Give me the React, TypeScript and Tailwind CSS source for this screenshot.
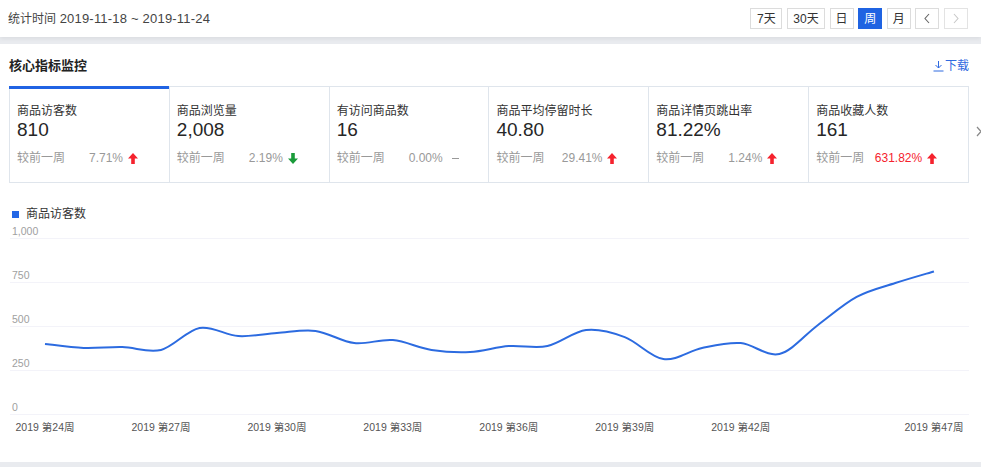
import React from "react";

const font = "font-['Liberation_Sans','Noto_Sans_CJK_SC',sans-serif]";

type Trend = "up" | "down" | "flat";

const metrics: { label: string; value: string; pct: string; trend: Trend; hot?: boolean }[] = [
  { label: "商品访客数", value: "810", pct: "7.71%", trend: "up" },
  { label: "商品浏览量", value: "2,008", pct: "2.19%", trend: "down" },
  { label: "有访问商品数", value: "16", pct: "0.00%", trend: "flat" },
  { label: "商品平均停留时长", value: "40.80", pct: "29.41%", trend: "up" },
  { label: "商品详情页跳出率", value: "81.22%", pct: "1.24%", trend: "up" },
  { label: "商品收藏人数", value: "161", pct: "631.82%", trend: "up", hot: true },
];

// weekly visitors, weeks 24..47
const data = [398, 375, 380, 364, 489, 443, 460, 472, 403, 420, 364, 352, 386, 386, 477, 437, 312, 375, 403, 341, 506, 665, 744, 810];

function TrendIcon({ trend }: { trend: Trend }) {
  if (trend === "flat") return <span className="ml-[9px] inline-block w-[7px] h-px bg-[#999]" />;
  const up = trend === "up";
  return (
    <svg width="10" height="11" viewBox="0 0 10 11" className="ml-[5px]">
      <g fill={up ? "#f5222d" : "#1a9b3a"} transform={up ? undefined : "rotate(180 5 5.5)"}>
        <polygon points="5,0 10,5.5 6.8,5.5 6.8,11 3.2,11 3.2,5.5 0,5.5" />
      </g>
    </svg>
  );
}

function MetricCell({ m, active }: { m: (typeof metrics)[number]; active: boolean }) {
  return (
    <div className="relative border-r border-[#dfe5ec] pl-[7px] pt-[16px] h-[95px]">
      {active && <div className="absolute -top-px -left-px right-0 h-[3px] bg-[#2063e3]" />}
      <div className="text-[12px] leading-[16px] text-[#333]">{m.label}</div>
      <div className="text-[19px] leading-[22px] text-[#262626]">{m.value}</div>
      <div className="flex items-center mt-[8px] text-[12px] leading-[18px] text-[#999]">
        <span className="w-[106px] flex justify-between">
          <span>较前一周</span>
          <span className={m.hot ? "text-[#f5222d]" : ""}>{m.pct}</span>
        </span>
        <TrendIcon trend={m.trend} />
      </div>
    </div>
  );
}

function smoothPath(pts: [number, number][]) {
  let d = `M${pts[0][0]},${pts[0][1]}`;
  for (let i = 0; i < pts.length - 1; i++) {
    const p0 = pts[i - 1] || pts[i];
    const p1 = pts[i];
    const p2 = pts[i + 1];
    const p3 = pts[i + 2] || p2;
    const c1x = p1[0] + (p2[0] - p0[0]) / 6;
    const c1y = p1[1] + (p2[1] - p0[1]) / 6;
    const c2x = p2[0] - (p3[0] - p1[0]) / 6;
    const c2y = p2[1] - (p3[1] - p1[1]) / 6;
    d += ` C${c1x},${c1y} ${c2x},${c2y} ${p2[0]},${p2[1]}`;
  }
  return d;
}

function Chart() {
  const top = 16;
  const h = 176;
  const x0 = 36;
  const step = 38.65;
  const pts = data.map((v, i) => [x0 + i * step, top + h - (v / 1000) * h] as [number, number]);
  const ticks = [1000, 750, 500, 250, 0];
  const xLabels = [24, 27, 30, 33, 36, 39, 42, 47];
  return (
    <svg width="960" height="218" className="block">
      {ticks.map((t, i) => {
        const y = top + i * 44;
        return (
          <g key={t}>
            <line x1="1" x2="960" y1={y + 0.5} y2={y + 0.5} stroke="#f3f3f9" />
            <text x="3" y={y - 3} fontSize="10.5" fill="#a0a0a0">
              {t.toLocaleString("en-US")}
            </text>
          </g>
        );
      })}
      <path d={smoothPath(pts)} fill="none" stroke="#2c6be0" strokeWidth="2" />
      {xLabels.map((w) => (
        <text key={w} x={x0 + (w - 24) * step} y="209" fontSize="10.5" fill="#555" textAnchor="middle">
          2019 第{w}周
        </text>
      ))}
    </svg>
  );
}

const ranges = [
  { t: "7天", w: "w-[32px]" },
  { t: "30天", w: "w-[38px]" },
  { t: "日", w: "w-[24px]" },
  { t: "周", w: "w-[24px]", active: true },
  { t: "月", w: "w-[24px]" },
];

export default function App() {
  return (
    <div className={`w-[981px] h-[467px] bg-[#e9ebef] overflow-hidden ${font}`}>
      {/* top bar */}
      <div className="h-[37px] bg-white flex items-center justify-between pl-[8px] pr-[13px] shadow-[0_2px_4px_rgba(0,0,0,0.06)]">
        <span className="text-[13px] text-[#444]">
          <span className="text-[12px]">统计时间</span>{" "}
          <span className="tracking-[0.2px]">2019-11-18 ~ 2019-11-24</span>
        </span>
        <div className="flex gap-[4.6px]">
          {ranges.map((r) => (
            <button
              key={r.t}
              className={`${r.w} h-[21px] text-[12px] leading-none border ${
                r.active ? "bg-[#1f63e2] border-[#1f63e2] text-white" : "bg-white border-[#dcdcdc] text-[#333]"
              }`}
            >
              {r.t}
            </button>
          ))}
          <button className="w-[24px] h-[21px] border border-[#dcdcdc] flex items-center justify-center">
            <svg width="8" height="11" viewBox="0 0 8 11">
              <path d="M6 1 L2 5.5 L6 10" fill="none" stroke="#666" strokeWidth="1.1" />
            </svg>
          </button>
          <button className="w-[24px] h-[21px] border border-[#e3e3e3] flex items-center justify-center">
            <svg width="8" height="11" viewBox="0 0 8 11">
              <path d="M2 1 L6 5.5 L2 10" fill="none" stroke="#c8c8c8" strokeWidth="1.1" />
            </svg>
          </button>
        </div>
      </div>

      {/* card */}
      <div className="mt-[7px] bg-white h-[418px] px-[9px] relative">
        <div className="h-[42px] flex items-center justify-between pt-[2px]">
          <span className="text-[13px] font-bold text-[#222]">核心指标监控</span>
          <span className="flex items-center text-[12px] text-[#2f6ae0] mr-[3px]">
            <svg width="11" height="12" viewBox="0 0 11 12" className="mr-[1px]">
              <path d="M5.5 1 V8 M2.5 5 L5.5 8 L8.5 5 M0.5 11 H10.5" fill="none" stroke="#2f6ae0" strokeWidth="1" />
            </svg>
            下载
          </span>
        </div>

        <div className="grid grid-cols-6 border-l border-t border-b border-[#dfe5ec] w-[960px]">
          {metrics.map((m, i) => (
            <MetricCell key={m.label} m={m} active={i === 0} />
          ))}
        </div>
        <svg width="8" height="11" viewBox="0 0 8 11" className="absolute left-[975px] top-[82px]">
          <path d="M2 1 L6 5.5 L2 10" fill="none" stroke="#888" strokeWidth="1.2" />
        </svg>

        <div className="flex items-center mt-[22px] ml-[3px] text-[12px] text-[#333] leading-[18px]">
          <span className="w-[7px] h-[7px] bg-[#2367e6] mr-[7px]" />
          商品访客数
        </div>
        <div className="-mt-px">
          <Chart />
        </div>
      </div>
    </div>
  );
}
